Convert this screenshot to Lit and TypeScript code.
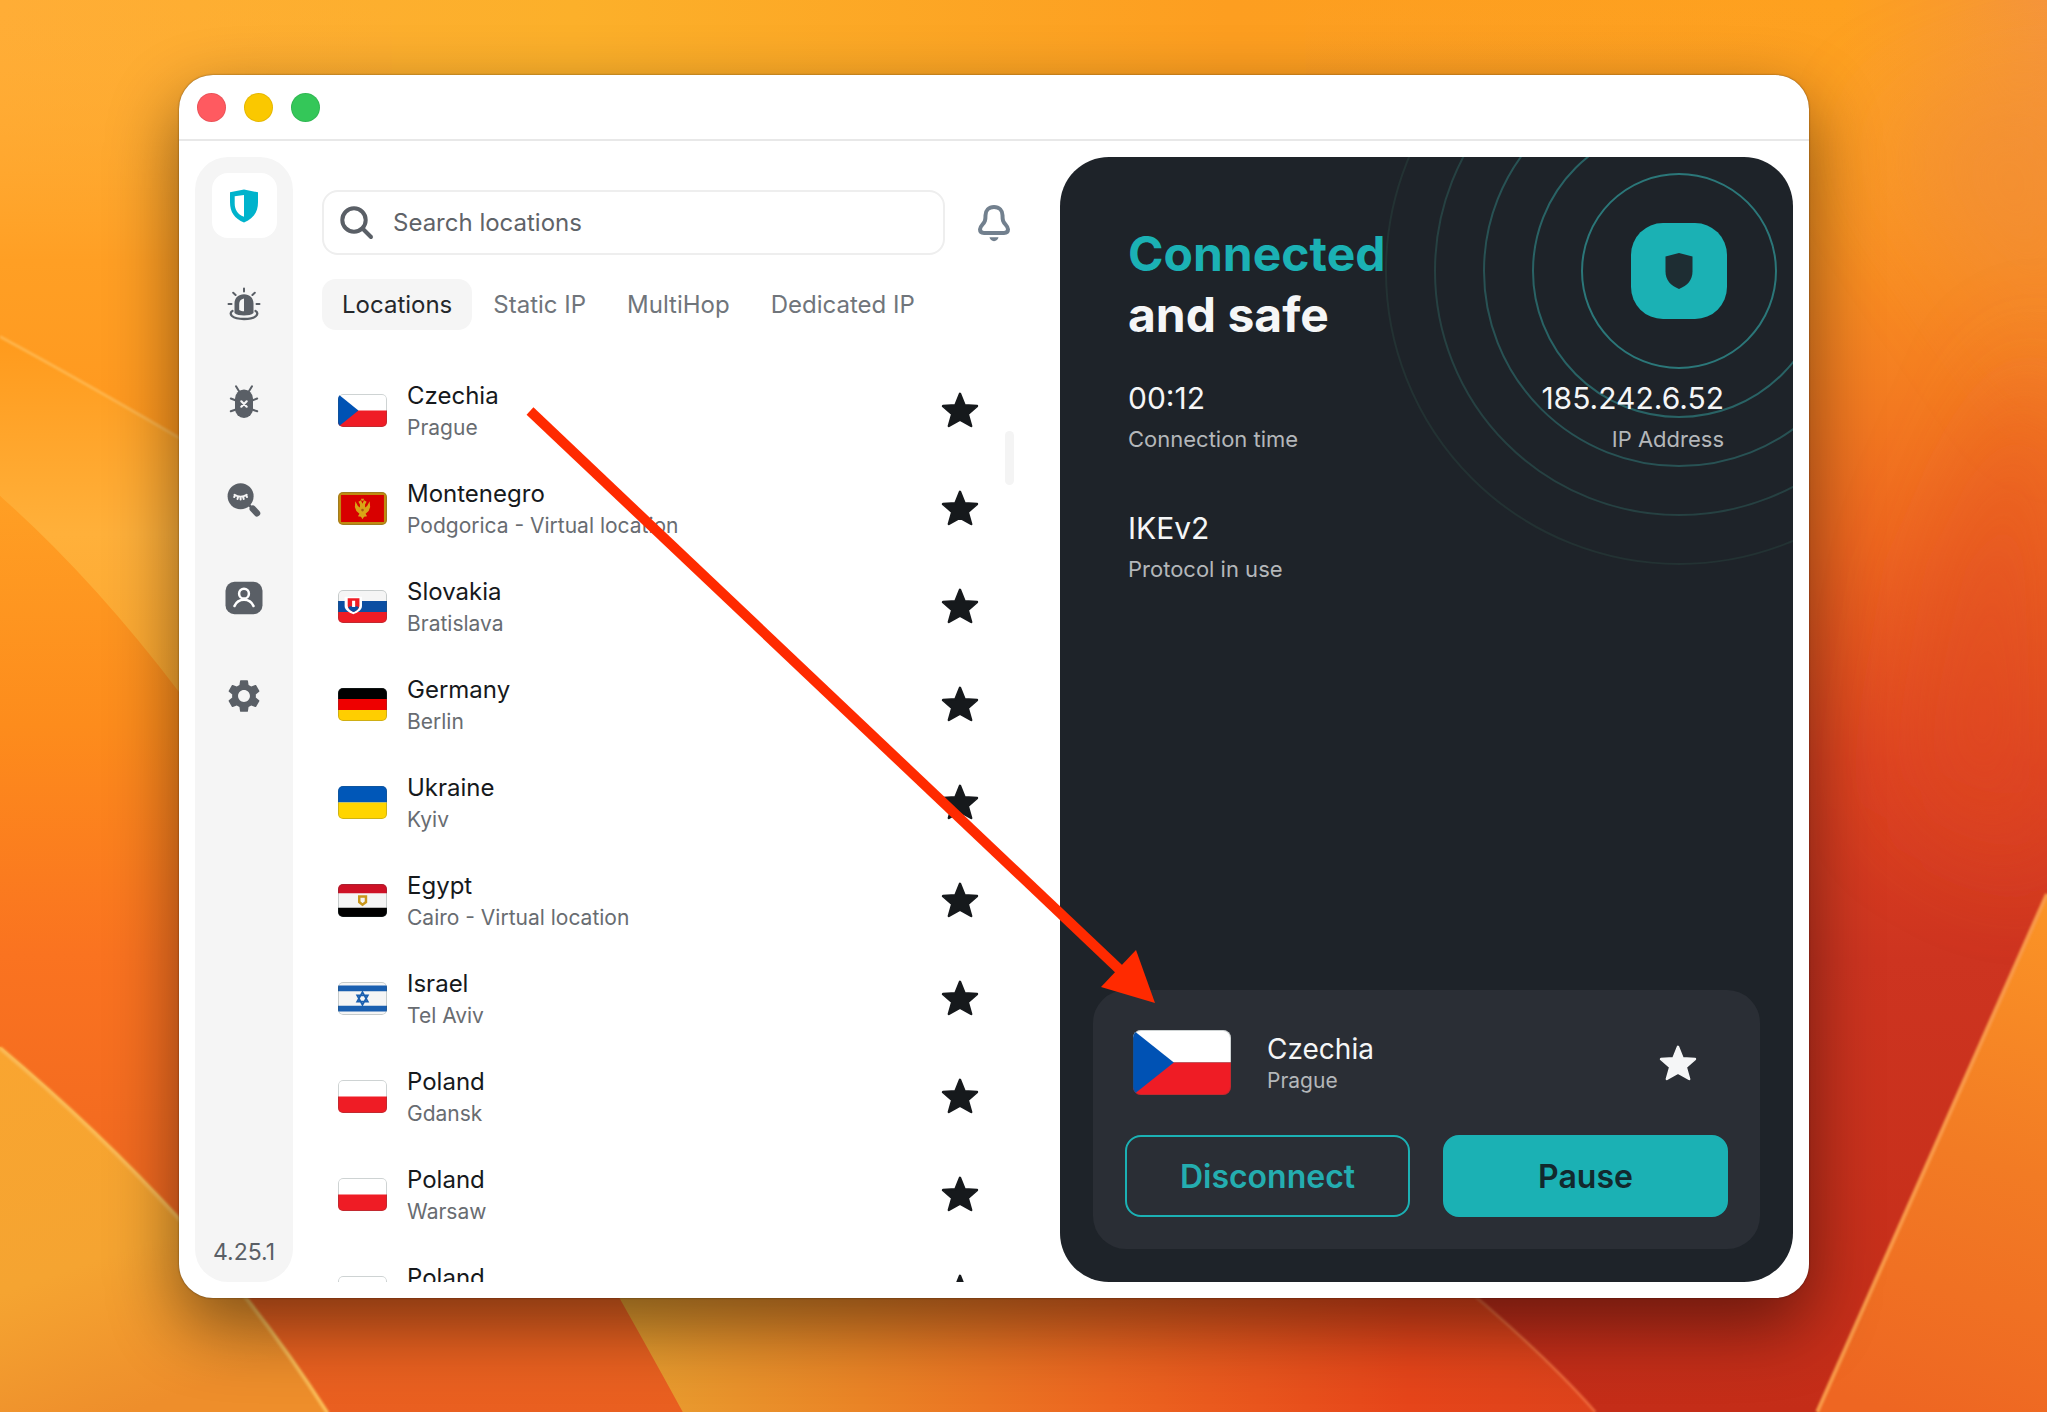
import { LitElement, html, css, svg } from "lit";
import { customElement, property, state } from "lit/decorators.js";
import { classMap } from "lit/directives/class-map.js";

interface Place {
  flag: string;
  name: string;
  city: string;
}

const PLACES: Place[] = [
  { flag: "cz", name: "Czechia", city: "Prague" },
  { flag: "me", name: "Montenegro", city: "Podgorica - Virtual location" },
  { flag: "sk", name: "Slovakia", city: "Bratislava" },
  { flag: "de", name: "Germany", city: "Berlin" },
  { flag: "ua", name: "Ukraine", city: "Kyiv" },
  { flag: "eg", name: "Egypt", city: "Cairo - Virtual location" },
  { flag: "il", name: "Israel", city: "Tel Aviv" },
  { flag: "pl", name: "Poland", city: "Gdansk" },
  { flag: "pl", name: "Poland", city: "Warsaw" },
  { flag: "pl", name: "Poland", city: "" },
];

const TABS = ["Locations", "Static IP", "MultiHop", "Dedicated IP"];

const FLAGS: Record<string, unknown> = {
  cz: svg`<path fill="#fff" d="M0 0h48v16H0z"/><path fill="#ef1c25" d="M0 16h48v16H0z"/><path fill="#0052b4" d="M0 0l20 16L0 32z"/>`,
  me: svg`<path fill="#c08a10" d="M0 0h48v32H0z"/><path fill="#d80000" d="M3 3h42v26H3z"/>
    <path fill="#d9a316" d="M24 11.500l-1.500-3.500-2.500 1.500 1.500 2.500v3l-2-1.500-2.500-4.500-.5 5.500 1.500 4 3 2.500-1.500 2.500 3 .5 1.500 2.500 1.500-2.500 3-.5-1.500-2.500 3-2.500 1.500-4-.5-5.500-2.500 4.500-2 1.500v-3l1.500-2.500-2.500-1.500z"/>
    <path fill="#d9a316" d="M22.500 6.500h3l-.5 2h-2z"/><circle cx="24" cy="17.500" r="1.300" fill="#a85a10"/>`,
  sk: svg`<path fill="#f5f5f5" d="M0 0h48v11H0z"/><path fill="#0b4ea2" d="M0 10.700h48V21.500H0z"/><path fill="#ef1c25" d="M0 21.300h48V32H0z"/>
    <path fill="#fff" d="M6.500 6.500h17v9c0 4-4.500 6.500-8.500 8-4-1.500-8.500-4-8.500-8z"/>
    <path fill="#ef1c25" d="M9.500 8h11.500v7c0 3-3 5-5.700 6.200C12.500 20 9.500 18 9.500 15z"/>
    <path fill="#0b4ea2" d="M10 17c1.500-1.500 3-1.500 5.300-.5 2.200-1 3.700-1 5.200.5-1 2-3 3.400-5.200 4.300-2.300-.9-4.300-2.300-5.300-4.300z"/>
    <path fill="#fff" d="M13.800 10.500h3v6h-3z"/>`,
  de: svg`<path d="M0 0h48v11H0z"/><path fill="#e00" d="M0 10.700h48V21.500H0z"/><path fill="#ffce00" d="M0 21.300h48V32H0z"/>`,
  ua: svg`<path fill="#0057b8" d="M0 0h48v16H0z"/><path fill="#ffd500" d="M0 16h48v16H0z"/>`,
  eg: svg`<path fill="#f5f5f5" d="M0 0h48v32H0z"/><path fill="#ce1126" d="M0 0h48v9H0z"/><path d="M0 23h48v9H0z"/>
    <path fill="none" stroke="#c9971c" stroke-width="2.400" d="M20.800 12.200h6.600v5.300L24 20l-3.200-2.500z"/>`,
  il: svg`<path fill="#f5f5f5" d="M0 0h48v32H0z"/><path fill="#1a5fb0" d="M0 3.500h48V9H0zM0 23h48v5.500H0z"/>
    <path fill="none" stroke="#1a5fb0" stroke-width="1.700" d="M24 9.800l5.200 9.200H18.800zM24 22.200l5.200-9.200H18.800z"/>`,
  pl: svg`<path fill="#fff" d="M0 0h48v16H0z"/><path fill="#ef1c25" d="M0 16h48v16H0z"/>`,
};

const NAV = [
  {
    label: "VPN",
    art: svg`<path fill="#00b3cc" fill-rule="evenodd" d="M20 3.600l14 2.700v10c0 9.500-4.500 16.700-14 20.100C10.500 33 6 25.800 6 16.300v-10zM20 9l-9.300 1.300v7c0 6 2.500 11 9.300 13.500z"/>`,
  },
  {
    label: "Alert",
    art: svg`<g fill="none" stroke="#5a5f66" stroke-width="2" stroke-linecap="round">
      <path d="M20 4.500v3M9.200 8.800l2.400 2.200M30.800 8.800L28.400 11M4.500 20h3M32.500 20h3"/>
      <path stroke-width="2.300" d="M8.500 27c-2 1-2.500 3-.5 5 2.500 2.200 7 3 12 3s9.500-.8 12-3c2-2 1.500-4-.5-5"/></g>
      <path fill="#5a5f66" fill-rule="evenodd" d="M10.500 29V19.500c0-5.500 4-9.200 9.500-9.200s9.500 3.700 9.500 9.200V29c-2 1.800-5.500 2.500-9.500 2.500s-7.500-.7-9.500-2.500zM20 14.500c-3 .6-4.800 2.500-4.800 5.500v6c1.300 1 3 1.300 4.800 1.300z"/>`,
  },
  {
    label: "Antivirus",
    art: svg`<rect x="11" y="7.500" width="18" height="28.500" rx="9" fill="#5a5f66"/>
      <g fill="none" stroke="#5a5f66" stroke-width="2" stroke-linecap="round"><path d="M15.500 10L12 4.300M24.500 10L28 4.300M12 18.500l-5.200-2M28 18.500l5.200-2M12 27.500l-5.200 1.800M28 27.500l5.200 1.800"/></g>
      <path fill="none" stroke="#f5f5f5" stroke-width="2.200" stroke-linecap="round" d="M17.300 19.300l5.400 5.400M22.700 19.300l-5.400 5.400"/>`,
  },
  {
    label: "Search",
    art: svg`<circle cx="16.600" cy="16.200" r="13" fill="#5a5f66"/>
      <path stroke="#5a5f66" stroke-width="2.500" d="M24 24l4 4"/><path stroke="#5a5f66" stroke-width="6.500" stroke-linecap="round" d="M28.800 28.800l4.200 4.400"/>
      <path fill="none" stroke="#f5f5f5" stroke-width="2" stroke-linecap="round" d="M10.500 14.800c3.500 2.600 8.700 2.600 12.200 0M11 15.500l-.8 1.500M14 17l-.5 2M16.600 17v2.500M19.200 17l.5 2M22.200 15.500l.8 1.500"/>`,
  },
  {
    label: "Alternative ID",
    art: svg`<rect x="1.500" y="3.800" width="37" height="32.400" rx="9" fill="#5a5f66"/>
      <circle cx="20" cy="15.700" r="4.900" fill="none" stroke="#fff" stroke-width="2.500"/>
      <path fill="none" stroke="#fff" stroke-width="2.600" stroke-linecap="round" d="M10.500 28c1.700-4 5.300-6.300 9.500-6.300s7.800 2.300 9.500 6.300"/>`,
  },
  {
    label: "Settings",
    art: svg`<path fill="#5a5f66" transform="translate(0.200 0.200) scale(1.650)" d="M19.140 12.940c.04-.3.060-.610.060-.940 0-.320-.020-.640-.070-.940l2.030-1.580c.18-.140.230-.410.120-.610l-1.920-3.320c-.12-.220-.370-.290-.590-.220l-2.390.960c-.5-.380-1.030-.7-1.620-.940l-.360-2.540c-.04-.240-.240-.410-.480-.410h-3.840c-.24 0-.430.170-.470.410l-.360 2.540c-.59.240-1.130.570-1.620.940l-2.390-.960c-.22-.080-.470 0-.590.220L2.740 8.870c-.12.210-.080.470.120.610l2.030 1.580c-.05.300-.090.630-.090.940s.020.640.070.940l-2.030 1.580c-.18.140-.230.410-.120.610l1.920 3.320c.12.220.370.290.590.220l2.390-.960c.5.380 1.030.7 1.620.940l.360 2.540c.05.240.240.410.480.410h3.840c.24 0 .440-.170.470-.410l.360-2.540c.59-.240 1.130-.560 1.620-.940l2.390.960c.22.080.470 0 .590-.220l1.920-3.320c.12-.220.070-.470-.120-.610l-2.010-1.580zM12 15.600c-1.980 0-3.600-1.620-3.600-3.600s1.620-3.600 3.600-3.600 3.600 1.620 3.600 3.600-1.620 3.600-3.600 3.600z"/>`,
  },
];

const star = html`<svg class="star" width="38" height="36" viewBox="0 0 38 36" aria-hidden="true">
  <path fill="currentColor" stroke="currentColor" stroke-width="2.400" stroke-linejoin="round"
    d="M19 1.800L23.600 13.200L36 14L26.800 22L30.200 34L19 27.800L7.800 34L11.200 22L2 14L14.400 13.200Z"/>
</svg>`;

const wallpaper = html`<svg class="wallpaper" viewBox="0 0 1568 1082" preserveAspectRatio="none" aria-hidden="true">
  <defs>
    <linearGradient id="sky" x1="0" y1="0" x2="1" y2="0">
      <stop offset="0" stop-color="#ffad36"/><stop offset=".28" stop-color="#fcb02a"/><stop offset=".6" stop-color="#fd9e20"/><stop offset=".9" stop-color="#fea11f"/><stop offset="1" stop-color="#f5953a"/>
    </linearGradient>
    <linearGradient id="right" x1="0" y1="0" x2="0" y2="1">
      <stop offset="0" stop-color="#fba02a" stop-opacity="0"/><stop offset=".2" stop-color="#f88c22"/><stop offset=".38" stop-color="#ee6820"/><stop offset=".54" stop-color="#dd4321"/><stop offset=".68" stop-color="#cd3420"/><stop offset="1" stop-color="#c42d18"/>
    </linearGradient>
    <linearGradient id="leftTop" x1="0" y1="0" x2="0" y2="1">
      <stop offset="0" stop-color="#ffad36" stop-opacity="0"/><stop offset=".5" stop-color="#ff9f24"/><stop offset="1" stop-color="#ff951c"/>
    </linearGradient>
    <linearGradient id="leftMid" x1="0" y1="0" x2="0" y2="1">
      <stop offset="0" stop-color="#ff9a1c"/><stop offset=".5" stop-color="#ffb03a"/><stop offset="1" stop-color="#fba52c"/>
    </linearGradient>
    <linearGradient id="leftLow" x1="0" y1="380" x2="0" y2="1082" gradientUnits="userSpaceOnUse">
      <stop offset="0" stop-color="#ff9f24"/><stop offset=".25" stop-color="#fd8c1c"/><stop offset=".5" stop-color="#fa7320"/><stop offset="1" stop-color="#e95f20"/>
    </linearGradient>
    <linearGradient id="corner" x1="0" y1="802" x2="100" y2="1082" gradientUnits="userSpaceOnUse">
      <stop offset="0" stop-color="#f9a530"/><stop offset=".6" stop-color="#f5a431"/><stop offset="1" stop-color="#ee8e2b"/>
    </linearGradient>
    <linearGradient id="base" x1="470" y1="0" x2="1230" y2="0" gradientUnits="userSpaceOnUse">
      <stop offset="0" stop-color="#e8a030"/><stop offset=".25" stop-color="#ea8426"/><stop offset=".5" stop-color="#ec6520"/><stop offset=".8" stop-color="#e6451a"/><stop offset="1" stop-color="#dd431c"/>
    </linearGradient>
    <linearGradient id="wedge" x1="1568" y1="690" x2="1450" y2="1082" gradientUnits="userSpaceOnUse">
      <stop offset="0" stop-color="#fb9426"/><stop offset=".5" stop-color="#f27b24"/><stop offset="1" stop-color="#ee6622"/>
    </linearGradient>
    <filter id="soft" x="-60%" y="-60%" width="220%" height="220%"><feGaussianBlur stdDeviation="40"/></filter>
    <filter id="edge" x="-20%" y="-20%" width="140%" height="140%"><feGaussianBlur stdDeviation="1"/></filter>
  </defs>
  <rect width="1568" height="1082" fill="url(#sky)"/>
  <rect x="1000" width="568" height="1082" fill="url(#right)"/>
  <path d="M1440 100L1600 40V330z" fill="#ee8a3a" opacity=".5" filter="url(#soft)"/>
  <path d="M1568 250v420l-110-60 30-180z" fill="#e04a22" opacity=".6" filter="url(#soft)"/>
  <rect width="300" height="400" fill="url(#leftTop)"/>
  <path d="M0 258Q70 296 150 343V560L0 380z" fill="url(#leftMid)"/>
  <path d="M0 380Q70 442 137 530L300 760H560V1082H0z" fill="url(#leftLow)"/>
  <path d="M0 258Q70 296 150 343" fill="none" stroke="#ffb850" stroke-width="2" filter="url(#edge)"/>
  <path d="M0 802Q76 866 138 934T251 1082H0z" fill="url(#corner)"/>
  <path d="M0 803Q76 867 138 935T251 1083" fill="none" stroke="#fab955" stroke-width="3" filter="url(#edge)"/>
  <path d="M420 900Q470 985 523 1082H1222Q1180 1034 1130 994L1000 900z" fill="url(#base)"/>
  <path d="M1100 968Q1180 1034 1222 1082" fill="none" stroke="#ee6a3c" stroke-width="2" filter="url(#edge)"/>
  <path d="M1568 685L1392 1082H1568z" fill="url(#wedge)"/>
  <path d="M1568 685L1392 1082" fill="none" stroke="#f99a48" stroke-width="3" filter="url(#edge)"/>
</svg>`;

@customElement("country-flag")
export class CountryFlag extends LitElement {
  @property() code = "cz";

  static styles = css`
    :host {
      display: block;
      flex: none;
      position: relative;
      overflow: hidden;
      border-radius: 5px;
    }
    :host::after {
      content: "";
      position: absolute;
      inset: 0;
      border-radius: inherit;
      box-shadow: inset 0 0 0 1px rgba(60, 80, 80, 0.25);
    }
    .art {
      display: block;
      width: 100%;
      height: 100%;
    }
  `;

  render() {
    return html`<svg class="art" viewBox="0 0 48 32" preserveAspectRatio="none" aria-hidden="true">${FLAGS[this.code]}</svg>`;
  }
}

@customElement("app-root")
export class AppRoot extends LitElement {
  @state() private tab = "Locations";
  @state() private section = "VPN";

  static styles = css`
    :host {
      display: flex;
      position: relative;
      box-sizing: border-box;
      height: 100vh;
      min-height: 900px;
      padding: 75px 238px 114px 179px;
      overflow: hidden;
      font-family: Inter, "Liberation Sans", sans-serif;
      color: #16191c;
    }
    * {
      box-sizing: border-box;
    }
    button {
      padding: 0;
      border: 0;
      background: none;
      font: inherit;
      color: inherit;
      cursor: pointer;
    }
    .wallpaper {
      position: absolute;
      inset: 0;
      width: 100%;
      height: 100%;
    }
    .window {
      position: relative;
      flex: 1;
      min-width: 0;
      display: flex;
      flex-direction: column;
      border-radius: 34px;
      background: #fff;
      box-shadow: 0 0 2px rgba(0, 0, 0, 0.5), 0 28px 70px rgba(0, 0, 0, 0.48);
    }
    .titlebar {
      display: flex;
      align-items: center;
      gap: 18px;
      height: 66px;
      padding-left: 18px;
      border-bottom: 2px solid #e8e8e8;
    }
    .light {
      width: 29px;
      height: 29px;
      border-radius: 50%;
      border: 1px solid rgba(0, 0, 0, 0.08);
    }
    .close {
      background: #ff5a60;
    }
    .minimise {
      background: #fac800;
    }
    .zoom {
      background: #34c759;
    }
    .body {
      flex: 1;
      min-height: 0;
      display: grid;
      grid-template-columns: 98px minmax(0, 767fr) minmax(0, 733fr);
      grid-template-rows: minmax(0, 1fr);
      padding: 16px;
    }
    .sidebar {
      display: flex;
      flex-direction: column;
      align-items: center;
      gap: 33px;
      padding: 16px 0;
      border-radius: 33px;
      background: #f5f5f5;
    }
    .nav {
      display: grid;
      place-items: center;
      width: 65px;
      height: 65px;
      border-radius: 16px;
    }
    .nav.on {
      background: #fff;
    }
    .version {
      margin-top: auto;
      font-size: 23px;
      line-height: 28px;
      color: #5a5f66;
    }
    .pane {
      display: flex;
      flex-direction: column;
      padding: 33px 46px 0 29px;
    }
    .top {
      display: flex;
      align-items: center;
      gap: 32px;
      padding-right: 3px;
    }
    .search {
      flex: 1;
      display: flex;
      align-items: center;
      gap: 19px;
      height: 65px;
      padding: 0 16px;
      border: 2px solid #eee;
      border-radius: 16px;
    }
    .field {
      flex: 1;
      min-width: 0;
      padding: 0;
      border: 0;
      outline: 0;
      background: none;
      font: 24px/32px Inter, "Liberation Sans", sans-serif;
      color: #16191c;
    }
    .field::placeholder {
      color: #5f6368;
      opacity: 1;
    }
    .bell {
      display: block;
      width: 34px;
      height: 38px;
    }
    .tabs {
      display: flex;
      gap: 1px;
      margin-top: 24px;
    }
    .tab {
      height: 51px;
      padding: 0 20px;
      border-radius: 14px;
      font-size: 24px;
      line-height: 32px;
      color: #70757b;
      white-space: nowrap;
    }
    .tab.on {
      background: #f5f5f5;
      color: #24272b;
    }
    .scroller {
      flex: 1;
      min-height: 0;
      display: flex;
      margin-top: 31px;
      overflow: hidden;
    }
    .list {
      flex: 1;
      min-width: 0;
      margin: 0;
      padding: 0;
      list-style: none;
    }
    .thumb {
      width: 9px;
      height: 54px;
      margin-top: 70px;
      border-radius: 5px;
      background: #f4f4f4;
    }
    .row {
      display: flex;
      align-items: center;
      gap: 20px;
      height: 98px;
      padding: 0 26px 0 16px;
    }
    .small {
      width: 49px;
      height: 33px;
    }
    .large {
      width: 98px;
      height: 65px;
      border-radius: 8px;
    }
    .place {
      flex: 1;
      min-width: 0;
      padding-top: 3px;
    }
    .name,
    .city {
      min-height: 32px;
      line-height: 32px;
      white-space: nowrap;
    }
    .name {
      font-size: 24px;
    }
    .city {
      font-size: 21px;
      color: #686c71;
    }
    .star {
      display: block;
    }
    .panel {
      position: relative;
      display: flex;
      flex-direction: column;
      padding: 66px 33px 33px;
      border-radius: 49px;
      overflow: hidden;
      background: #1e2329;
      color: #f5f6f7;
    }
    .rings {
      position: absolute;
      top: -186px;
      right: -186px;
    }
    .status {
      position: relative;
      display: grid;
      grid-template-columns: 1fr auto;
      padding: 0 33px 0 35px;
    }
    .headline {
      margin: 0 0 32px;
      font-size: 48px;
      line-height: 61px;
      font-weight: 700;
    }
    .accent {
      display: block;
      color: #1bb1b4;
    }
    .badge {
      display: grid;
      place-items: center;
      justify-self: end;
      width: 96px;
      height: 96px;
      border-radius: 32px;
      background: #1bb1b4;
    }
    .stat {
      margin-bottom: 48px;
    }
    .stat.end {
      padding-right: 3px;
      text-align: right;
    }
    .value {
      font-size: 30px;
      line-height: 42px;
    }
    .caption {
      font-size: 22px;
      line-height: 40px;
      color: #b4b7ba;
    }
    .card {
      position: relative;
      margin-top: auto;
      padding: 40px 32px 32px;
      border-radius: 33px;
      background: #2a2e35;
    }
    .current {
      display: flex;
      align-items: center;
      gap: 36px;
      height: 65px;
      padding: 0 31px 0 8px;
    }
    .current .place {
      padding-top: 4px;
    }
    .current .name {
      font-size: 28px;
    }
    .current .city {
      color: #b4b7ba;
    }
    .actions {
      display: grid;
      grid-template-columns: 1fr 1fr;
      gap: 33px;
      margin-top: 40px;
    }
    .action {
      height: 82px;
      border: 2px solid #1bb1b4;
      border-radius: 16px;
      font-size: 32px;
      font-weight: 600;
      color: #24adb0;
    }
    .action.solid {
      background: #1bb1b4;
      color: #12292d;
    }
    .pointer {
      position: absolute;
      top: 325px;
      left: 341px;
      pointer-events: none;
    }
  `;

  private renderPlace(p: Place) {
    return html`<li class="row">
      <country-flag class="small" code=${p.flag}></country-flag>
      <div class="place">
        <div class="name">${p.name}</div>
        <div class="city">${p.city}</div>
      </div>
      <button aria-label="Remove from favourites">${star}</button>
    </li>`;
  }

  render() {
    return html`
      ${wallpaper}
      <main class="window">
        <header class="titlebar">
          <button class="light close" aria-label="Close"></button>
          <button class="light minimise" aria-label="Minimise"></button>
          <button class="light zoom" aria-label="Zoom"></button>
        </header>
        <div class="body">
          <nav class="sidebar">
            ${NAV.map(
              (n) => html`<button
                class=${classMap({ nav: true, on: this.section === n.label })}
                aria-label=${n.label}
                @click=${() => (this.section = n.label)}
              >
                <svg width="40" height="40" viewBox="0 0 40 40" aria-hidden="true">${n.art}</svg>
              </button>`
            )}
            <div class="version">4.25.1</div>
          </nav>
          <section class="pane">
            <div class="top">
              <label class="search">
                <svg width="34" height="34" viewBox="0 0 34 34" aria-hidden="true">
                  <g fill="none" stroke="#5a5f66" stroke-width="4">
                    <circle cx="14" cy="14" r="11.700" />
                    <path stroke-linecap="round" d="M23 23l8 8" />
                  </g>
                </svg>
                <input class="field" type="text" aria-label="Search locations" placeholder="Search locations" />
              </label>
              <button class="bell" aria-label="Notifications">
                <svg width="34" height="38" viewBox="0 0 34 38" aria-hidden="true">
                  <path fill="none" stroke="#72808e" stroke-width="4" stroke-linejoin="round"
                    d="M17 3c-5.300 0-8.500 3.700-8.500 8.300 0 5.200-.6 6.500-3 9.200-1.700 1.900-2.500 3-2.500 4.800C3 27.700 4.700 29 7 29h20c2.300 0 4-1.300 4-3.700 0-1.800-.8-2.900-2.500-4.800-2.400-2.700-3-4-3-9.200C25.500 6.700 22.300 3 17 3z" />
                  <path fill="#72808e" d="M12.500 33.300h9c-.4 2.300-2.200 3.900-4.500 3.900s-4.100-1.600-4.500-3.900z" />
                </svg>
              </button>
            </div>
            <div class="tabs" role="tablist">
              ${TABS.map(
                (t) => html`<button
                  role="tab"
                  class=${classMap({ tab: true, on: this.tab === t })}
                  aria-selected=${this.tab === t}
                  @click=${() => (this.tab = t)}
                >${t}</button>`
              )}
            </div>
            <div class="scroller">
              <ul class="list">
                ${PLACES.map((p) => this.renderPlace(p))}
              </ul>
              <div class="thumb"></div>
            </div>
          </section>
          <section class="panel">
            <svg class="rings" width="600" height="600" viewBox="0 0 600 600" fill="none" stroke-width="2" aria-hidden="true">
              <circle cx="300" cy="300" r="97" stroke="#2b7779" />
              <circle cx="300" cy="300" r="146" stroke="#296365" />
              <circle cx="300" cy="300" r="195" stroke="#285254" />
              <circle cx="300" cy="300" r="244" stroke="#264142" />
              <circle cx="300" cy="300" r="293" stroke="#233233" />
            </svg>
            <div class="status">
              <h1 class="headline"><span class="accent">Connected</span>and safe</h1>
              <div class="badge">
                <svg width="30" height="38" viewBox="0 0 30 38" aria-hidden="true">
                  <path fill="#1e2d33" d="M15 1l13.500 3.500v15c0 8.500-5 14-13.500 17.500C6.500 33.500 1.500 28 1.500 19.500v-15z" />
                </svg>
              </div>
              <div class="stat">
                <div class="value">00:12</div>
                <div class="caption">Connection time</div>
              </div>
              <div class="stat end">
                <div class="value">185.242.6.52</div>
                <div class="caption">IP Address</div>
              </div>
              <div class="stat">
                <div class="value">IKEv2</div>
                <div class="caption">Protocol in use</div>
              </div>
            </div>
            <div class="card">
              <div class="current">
                <country-flag class="large" code="cz"></country-flag>
                <div class="place">
                  <div class="name">Czechia</div>
                  <div class="city">Prague</div>
                </div>
                <button aria-label="Remove from favourites">${star}</button>
              </div>
              <div class="actions">
                <button class="action">Disconnect</button>
                <button class="action solid">Pause</button>
              </div>
            </div>
          </section>
        </div>
        <svg class="pointer" width="650" height="620" viewBox="0 0 650 620" aria-hidden="true">
          <path d="M10 11L600 570" stroke="#ff2a00" stroke-width="10" />
          <path d="M635 603L616 550L581 587Z" fill="#ff2a00" />
        </svg>
      </main>
    `;
  }
}
